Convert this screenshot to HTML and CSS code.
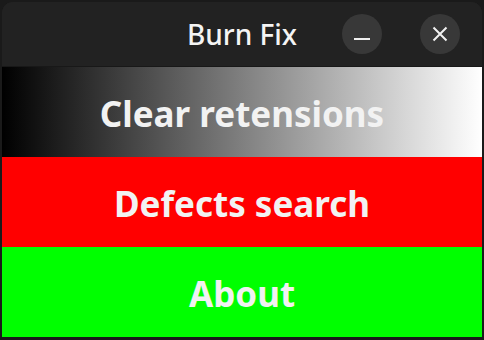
FILE: index.html
```html
<!DOCTYPE html>
<html lang="en">

<head>
    <meta charset="UTF-8">
    <meta name="viewport" content="width=device-width, initial-scale=1.0">
    <title>Burn Fix</title>
    <link rel="stylesheet" href="styles.css">
</head>

<body>
    <div class="ventana">
        <header class="barra">
            <div></div>
            <h1 class="titulo">Burn Fix</h1>
            <div class="controles">
                <button class="circulo" title="Minimize">
                    <svg width="16" height="16" viewBox="0 0 16 16">
                        <rect x="0" y="12" width="16" height="2" fill="#f0f0f0"/>
                    </svg>
                </button>
                <button class="circulo" title="Close">
                    <svg width="16" height="16" viewBox="0 0 16 16">
                        <path d="M1.5 1.5 L14.5 14.5 M14.5 1.5 L1.5 14.5" stroke="#f0f0f0" stroke-width="2" fill="none"/>
                    </svg>
                </button>
            </div>
        </header>
        <main class="menu">
            <button class="opcion degradado">Clear retensions</button>
            <button class="opcion rojo">Defects search</button>
            <button class="opcion verde">About</button>
        </main>
    </div>
</body>

</html>
```

FILE: styles.css
```css
body {
    margin: 0;
    background-color: #1a1a1a;
    font-family: "Noto Sans", "Open Sans", sans-serif;
}

.ventana {
    margin: 2px 2px 0 2px;
    height: 335px;
    display: flex;
    flex-direction: column;
    border-radius: 11px 11px 0 0;
    overflow: hidden;
    background-color: #222222;
}

.barra {
    height: 64px;
    flex: none;
    display: grid;
    grid-template-columns: 1fr auto 1fr;
    align-items: center;
    background-color: #222222;
    border-bottom: 1px solid #181818;
}

.titulo {
    margin: 0;
    color: #f4f4f4;
    font-size: 28px;
    font-weight: 500;
}

.controles {
    display: flex;
    justify-content: flex-end;
    gap: 38px;
    padding-right: 22px;
}

.circulo {
    width: 40px;
    height: 40px;
    padding: 0;
    border: none;
    border-radius: 50%;
    background-color: #383838;
    display: flex;
    align-items: center;
    justify-content: center;
}

.menu {
    flex: 1;
    display: flex;
    flex-direction: column;
}

.opcion {
    flex: 1;
    border: none;
    margin: 0;
    padding-top: 4px;
    color: #f2f2f2;
    font-family: "Noto Sans", "Open Sans", sans-serif;
    font-size: 35px;
    font-weight: bold;
}

.degradado {
    background: linear-gradient(to right, black, white);
}

.rojo {
    background-color: #ff0000;
}

.verde {
    background-color: #00ff00;
}
```
